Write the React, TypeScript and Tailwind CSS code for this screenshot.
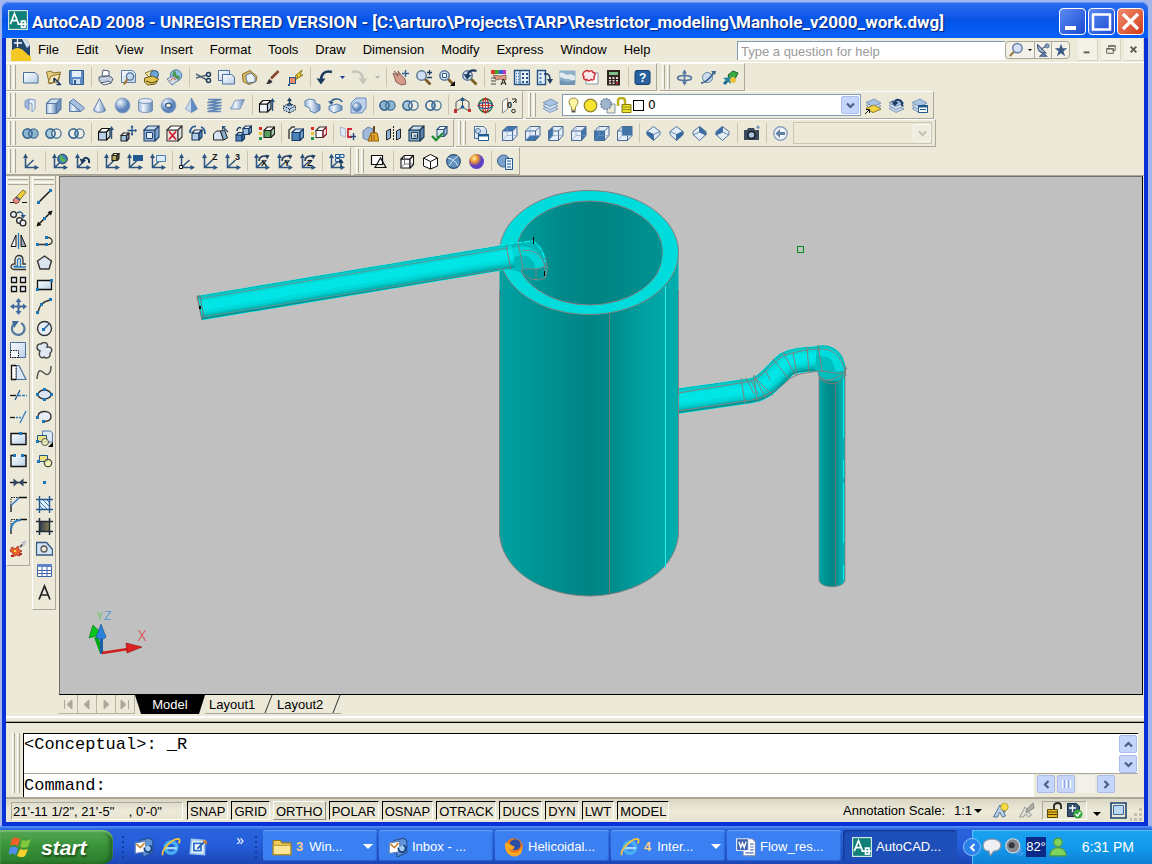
import type { ReactNode } from "react";

const NAVY = "#1d3a5f";
const UCS = "#2b5580";

const cube = (x: number, y: number, s: number, d: number, f: string, t: string, r: string, k = NAVY) => (
  <g stroke={k} strokeWidth="1.1" strokeLinejoin="round">
    <path fill={f} d={`M${x} ${y + d}h${s}v${s}h${-s}z`} />
    <path fill={t} d={`M${x} ${y + d}l${d} ${-d}h${s}l${-d} ${d}z`} />
    <path fill={r} d={`M${x + s} ${y + d}l${d} ${-d}v${s}l${-d} ${d}z`} />
  </g>
);

const axes = (
  <g>
    <path d="M3.500 3v11.500H15M3.500 14.500L11.500 7" stroke={UCS} strokeWidth="1.500" fill="none" />
    <path d="M1 5L3.500.5l2.500 4.500zM12.500 12L17 14.500l-4.500 2.500z" fill={UCS} />
  </g>
);

const rings = (a: string, m: string, b: string) => (
  <g stroke="#3d6b95" strokeWidth="1.200">
    <circle cx="5.500" cy="8.500" r="4.600" fill={a} />
    <circle cx="11.500" cy="8.500" r="4.600" fill={b} />
    <path d="M8.500 5a4.600 4.600 0 0 1 0 7a4.600 4.600 0 0 1 0-7z" fill={m} />
    <circle cx="5.500" cy="8.500" r="4.600" fill="none" />
  </g>
);

const dots = (pts: [number, number][]) => (
  <g fill="#1b75b8">
    {pts.map(([x, y]) => (
      <rect key={`${x}-${y}`} x={x} y={y} width="3" height="3" />
    ))}
  </g>
);

const viewBoxCube = (face: string) => {
  const p: Record<string, string> = {
    top: "M1.500 6L6 1.500H16L11.500 6z",
    bottom: "M1.500 15.500L6 10.500H16L11.500 15.500z",
    left: "M1.500 6L6 1.500V10.500L1.500 15.500z",
    right: "M11.500 6L16 1.500V10.500L11.500 15.500z",
    front: "M1.500 6H11.500V15.500H1.500z",
    back: "M6 1.500H16V10.500H6z",
  };
  return (
    <g>
      <path d="M1.500 6L6 1.500H16V10.500L11.500 15.500H1.500z" fill="#e4edf8" />
      <path d={p[face]} fill="#3f76ae" />
      <path d="M1.500 6L6 1.500H16V10.500L11.500 15.500H1.500zM1.500 6H11.500V15.500M11.500 6L16 1.500" stroke="#4a6c94" fill="none" />
      <path d="M6 1.500V10.500H16M6 10.500L1.500 15.500" stroke="#7f9dbf" strokeWidth=".6" fill="none" />
    </g>
  );
};

const isoFaces = [
  ["M2 6.500L8.500 9.500V15.500L2 9.500z", "#2f6ba8"],
  ["M8.500 9.500L15 6.500V9.500L8.500 15.500z", "#2f6ba8"],
  ["M8.500 1.500L15 7.500V10L8.500 7z", "#2f6ba8"],
  ["M8.500 1.500L2 7.500V10L8.500 7z", "#2f6ba8"],
];

const isoView = (k: number) => (
  <g stroke="#4f7199" strokeLinejoin="round">
    <path d="M8.500 1.500L15 6.500V9.500L8.500 15.500L2 9.500V6.500z" fill="#e3edf8" />
    <path d={isoFaces[k][0]} fill={isoFaces[k][1]} />
    <path d={k < 2 ? "M2 6.500L8.500 9.500L15 6.500M8.500 9.500V15.500" : "M2 10L8.500 7L15 10M8.500 7V1.500"} fill="none" strokeWidth=".8" />
  </g>
);

const layersArt = (
  <g stroke="#6f8db3" strokeWidth=".8">
    <path d="M1 11.500L9 8L16 12L8 15.500z" fill="#c4d4e8" />
    <path d="M1 8.500L9 5L16 9L8 12.500z" fill="#d5e2f2" />
    <path d="M1 5.500L9 2L16 6L8 9.500z" fill="#a9c3e2" />
  </g>
);

const rotAxis = (t: string) => (
  <g>
    {axes}
    <path d="M6 8a5 5 0 0 1 8-4" stroke={NAVY} strokeWidth="1.5" fill="none" />
    <path d="M12.500 1.500l4 1-2.500 4z" fill={NAVY} />
    <text x="8" y="13" fontSize="9" fontWeight="700" fill="#111" fontFamily="Liberation Sans, sans-serif">{t}</text>
  </g>
);

const magnifier = (
  <g>
    <path d="M10 10l5.500 5.500" stroke="#7a5b22" strokeWidth="2.600" />
    <circle cx="6.500" cy="6.500" r="4.700" fill="#cfe0f2" stroke="#5f7693" strokeWidth="1.500" />
  </g>
);

const cadLogo = (
  <g>
    <rect width="17" height="17" fill="#0f7f78" />
    <rect x=".5" y=".5" width="16" height="16" fill="none" stroke="#cfe8e6" />
    <path d="M2 12L5.500 3L9 12M3 9h5M8 12h8M11.500 9.500v5h3v-5z" stroke="#fff" strokeWidth="1.400" fill="none" />
  </g>
);

const ie = (
  <g fill="none">
    <circle cx="8.500" cy="9" r="4.800" stroke="#49b0f4" strokeWidth="3" />
    <path d="M4 9.500h9.500" stroke="#a5dcfd" strokeWidth="2" />
    <path d="M1.500 15.500C0 12 8 2 14.500 1.500c2 0 1.500 2.500.5 4" stroke="#f3c43c" strokeWidth="1.500" />
  </g>
);

const outlook = (
  <g>
    <path d="M5 3l8-2 3 2v10l-8 4z" fill="#5f94dc" stroke="#274f8d" />
    <path d="M1 5l9-1.500v9L1 14z" fill="#fff" stroke="#5a7fb5" />
    <path d="M2 6l3.500 3L9 5" stroke="#c3802c" fill="none" strokeWidth="1.300" />
    <path d="M9 9a3 3 0 1 0 4-2" stroke="#16407f" strokeWidth="1.500" fill="#a7cdf6" />
  </g>
);

const art: Record<string, ReactNode> = {
  new: <path d="M1.500 3.500H13l3 3v7.500H1.500z" fill="url(#paper)" stroke="#4c6f97" />,
  open: (
    <g>
      <path d="M1.500 3l5-1 1 2 8-1-2 9-9 3z" fill="#e8cf7e" stroke="#8b7433" />
      <path d="M3 14l3-7 9-2-3 8z" fill="#f8e9b4" stroke="#8b7433" />
      <path d="M9 9l6 6M11.500 15.500H16M9 9v4" stroke={NAVY} strokeWidth="1.600" />
    </g>
  ),
  save: (
    <g>
      <path d="M1.500 1.500h14v14h-13l-1-1z" fill="#5e8cc4" stroke="#2f5b91" />
      <rect x="4" y="2" width="9" height="6" fill="#e6eff9" />
      <rect x="5" y="10" width="7" height="5" fill="#cddcee" />
      <rect x="6" y="11" width="2" height="4" fill="#2f5b91" />
    </g>
  ),
  print: (
    <g stroke="#4c5c72">
      <path d="M5 7l1-6 6 1v5z" fill="#fff" />
      <path d="M2 8l11-1 3 3-2 4H4l-2-3z" fill="#c4d0df" />
      <path d="M4 14l8-2 2 2-7 2z" fill="#f3f6fa" />
    </g>
  ),
  preview: (
    <g>
      <path d="M1.500 1.500h11l3 3v9h-14z" fill="url(#paper)" stroke="#5f7fa5" />
      <circle cx="10" cy="7.500" r="3.600" fill="#c4daf1" stroke="#546f92" strokeWidth="1.300" />
      <path d="M7.500 10L4 15.500" stroke="#a07735" strokeWidth="2.200" />
    </g>
  ),
  publish: (
    <g>
      <path d="M2 4l8-3 4 3-8 4z" fill="#f2e3a0" stroke="#8a7636" />
      <circle cx="11.500" cy="5.500" r="4" fill="#6aa8d8" stroke="#35577c" />
      <path d="M1.500 9l8-2 6 3-3 5-8 1-3-3z" fill="#e2c34d" stroke="#6d5d28" />
      <path d="M3 12l6 2 5-2" stroke="#554618" fill="none" />
    </g>
  ),
  web: (
    <g>
      <circle cx="10" cy="6.500" r="5.700" fill="#8fc3ea" stroke="#53799f" />
      <path d="M8 1.500c4 2 0 4 4 5s1 4-1 5c-4-3-6-5-3-10z" fill="#4b9c50" />
      <path d="M1 10l6-3 6 4-7 5z" fill="#cfdceb" stroke="#66809e" />
      <path d="M4 12l3-3 3 2" stroke="#d85a30" fill="none" />
    </g>
  ),
  cut: (
    <g fill="none">
      <path d="M1 5l11 6M1 9l11-3" stroke="#59677a" strokeWidth="1.500" />
      <circle cx="13.500" cy="5.500" r="2" stroke={NAVY} strokeWidth="1.500" />
      <circle cx="13.500" cy="11.500" r="2" stroke={NAVY} strokeWidth="1.500" />
    </g>
  ),
  copy: (
    <g stroke="#4c719c">
      <path d="M.5 1.500h11v10H.500z" fill="url(#paper)" />
      <path d="M4.500 5.500h9l3 2.500v7h-12z" fill="url(#paper)" />
    </g>
  ),
  paste: (
    <g>
      <path d="M1.500 5L9 1.500l7 6-1 5-7 3-6-3z" fill="#ddb85c" stroke="#8a6c2c" />
      <path d="M5 6l5-2 4 4v5l-7 1-2-4z" fill="#e6effa" stroke="#5475a0" />
    </g>
  ),
  brush: (
    <g>
      <path d="M14.500 2L7 9.500" stroke="#8b4a2c" strokeWidth="2.600" />
      <path d="M2 15c2-1 1-3 3.500-5l3 2.500C7 15 4.500 15 2 15z" fill="#333" />
    </g>
  ),
  block: (
    <g>
      <path d="M15 1L8 7h3L8 11l8-5h-3z" fill="#f5d432" stroke="#8b7619" />
      <rect x="2.500" y="8.500" width="6" height="6" fill="#ef8a62" stroke="#23578c" />
      <path d="M1 15h2v2H1z" fill="#23578c" />
    </g>
  ),
  undo: (
    <g>
      <path d="M16 3C9 1 5 5 5 11" stroke={NAVY} strokeWidth="2.400" fill="none" />
      <path d="M.500 9.500h9L5 15.500z" fill={NAVY} />
    </g>
  ),
  redo: (
    <g>
      <path d="M1 3c7-2 11 2 11 8" stroke="#c6c5bb" strokeWidth="2.400" fill="none" />
      <path d="M7.500 9.500h9L12 15.500z" fill="#c6c5bb" />
    </g>
  ),
  pan: (
    <g>
      <path d="M1 4l5 3-4-5 5 4-1-4 4 5 3 3 1 5-5 1-5-3z" fill="#d69a8c" stroke="#7b5148" strokeWidth=".8" />
      <path d="M13.500 1v7M10 4.500h7" stroke="#33628f" strokeWidth="1.400" />
    </g>
  ),
  zoomRt: <g>{magnifier}<path d="M12 3.500h5M14.500 1v5M12 8.500h5" stroke={NAVY} strokeWidth="1.300" /></g>,
  zoomWin: <g>{magnifier}<path d="M4.500 4.500h4v4h-4z" stroke="#33628f" fill="#fff" /><path d="M17 12v5h-5z" fill="#000" /></g>,
  zoomPrev: <g>{magnifier}<path d="M15.500 2C10 0 7 3 6 7" stroke={NAVY} strokeWidth="2.200" fill="none" /><path d="M2.500 5l8 1-4.500 4.500z" fill={NAVY} /></g>,
  props: (
    <g>
      <path d="M1 1h4v4H1z" fill="#e0392e" /><path d="M5 1h4v4H5z" fill="#42a832" /><path d="M9 1h4v4H9z" fill="#3a5fd9" /><path d="M13 1h3v4h-3z" fill="#c531c0" />
      <path d="M3 6l7 1 6-1v5l-6-1-4 1z" fill="#dc9c87" stroke="#7b4b3c" strokeWidth=".7" />
      <path d="M1 9h5M1 12h5M1 15h5" stroke="#444" />
      <path d="M11 16l2.500-6L16 16M12 14h3" stroke="#111" fill="none" />
    </g>
  ),
  dc: (
    <g>
      <path d="M1.500 1.500h15v14h-15z" fill="#e7f0fa" stroke="#22507f" strokeWidth="1.400" />
      <path d="M7 1.500v14" stroke="#22507f" />
      <path d="M3 4.500h3M3 7.500h3M3 10.500h3M3 13h3" stroke="#4c8cc8" strokeWidth="1.500" strokeDasharray="1 1" />
      <path d="M9 4h2v2H9zM13 4h2v2h-2zM9 8h2v2H9zM13 8h2v2h-2zM9 12h2v2H9zM13 12h2v2h-2z" fill="#22507f" />
    </g>
  ),
  palette: (
    <g>
      <path d="M1.500 1.500h8v14h-8z" fill="#e7f0fa" stroke="#22507f" strokeWidth="1.400" />
      <path d="M3.500 4h2v2h-2zM3.500 8h2v2h-2zM3.500 12h2v2h-2z" fill="#3f7fbb" />
      <path d="M8 5c4-1 6 1 6 5" stroke={NAVY} strokeWidth="1.500" fill="none" />
      <path d="M11 10h6l-3 5z" fill={NAVY} />
    </g>
  ),
  sheet: (
    <g>
      <path d="M.5 1.500h16v14H.500z" fill="#8fb0c9" />
      <path d="M1 4c4-2 6 4 10 1l5 2v4c-4 2-5-2-9-1L1 8z" fill="#e3e9ec" /><path d="M1 11l8 2 7-2v5H1z" fill="#6f95b2" />
    </g>
  ),
  markup: (
    <g>
      <path d="M4 4h12v11H4z" fill="#fff" stroke="#8a94a2" />
      <path d="M3 2.500c2-2 4 0 4 0s3-2 4 1c3 0 2 3 1 4 1 3-1 4-3 3-2 2-4 1-4 0-3 1-4-2-3-3C0 6 1 3 3 2.500z" fill="#fde9e9" stroke="#cf2f3a" strokeWidth="1.500" />
    </g>
  ),
  calc: (
    <g>
      <rect x="2" y="1" width="13" height="15.500" fill="#31241f" />
      <rect x="4" y="3" width="9" height="3" fill="#7dc08a" />
      <path d="M4 8h2v2H4zM7.500 8h2v2h-2zM11 8h2v2h-2zM4 11h2v1.500H4zM7.500 11h2v1.500h-2zM11 11h2v1.500h-2zM4 13.500h2V15H4zM7.500 13.500h2V15h-2z" fill="#e8d6d0" /><path d="M11 13.500h2V15h-2z" fill="#e03030" />
    </g>
  ),
  help: (
    <g>
      <rect x="1" y="1.500" width="15" height="14" rx="2" fill="#29629f" stroke="#173f6d" />
      <text x="5" y="13" fontSize="12" fontWeight="700" fill="#fff" fontFamily="Liberation Sans, sans-serif">?</text>
    </g>
  ),
  orbit: (
    <g>
      <ellipse cx="8.500" cy="9" rx="7" ry="2.500" fill="none" stroke="#54779f" strokeWidth="1.600" />
      <path d="M8.500 2v13" stroke="#54779f" strokeWidth="1.800" /><path d="M6 4.500l2.500-4 2.500 4zM6 12.500l2.500 4 2.500-4z" fill="#54779f" />
    </g>
  ),
  orbit2: (
    <g>
      <circle cx="8.500" cy="8.500" r="5" fill="#cbdcf0" stroke="#63819f" />
      <path d="M2 14C6 14 14 7 15 2" stroke="#3d638f" strokeWidth="1.800" fill="none" /><path d="M12 2h5l-1 4z" fill="#3d638f" />
    </g>
  ),
  walk: (
    <g>
      <path d="M6 6l5-4 5 2-3 6-5 2z" fill="#3aab44" stroke="#196024" /><path d="M2 15l6-6" stroke="#1d6b8e" strokeWidth="3" /><path d="M1 9l7-1 1 7z" fill="#2787a5" />
      <circle cx="11" cy="11" r="3" fill="#edc33b" />
    </g>
  ),
  poly: <g stroke="#7d9cc4"><path d="M3 4l4-2v11l-4-3z" fill="#9db8da" /><path d="M7 2l6 1v9l-3 3V7l-3-1z" fill="#e3edf8" /></g>,
  box: cube(1.500, 2, 10, 4.500, "url(#steel)", "#cfdff1", "#6f93c3", "#5b7ba6"),
  wedge: <g stroke="#5b7ba6"><path d="M1.500 14.500V5L13 14.500z" fill="url(#steel)" /><path d="M1.500 5l4-3 11 9-3.500 3.500z" fill="#a9c2e2" /></g>,
  cone: <path d="M8.500 1.500L14.500 13c0 3-12 3-12 0z" fill="url(#steel)" stroke="#6482ac" />,
  sphere: <circle cx="8.500" cy="8.500" r="7.500" fill="url(#ball)" stroke="#7896c0" strokeWidth=".6" />,
  cyl: <g stroke="#6482ac" strokeWidth=".8"><path d="M1.500 4v9c0 3.300 14 3.300 14 0V4z" fill="url(#steel)" /><ellipse cx="8.500" cy="4" rx="7" ry="2.500" fill="#dfeaf7" /></g>,
  torus: <g><circle cx="8.500" cy="8.500" r="7.400" fill="url(#ball)" stroke="#7896c0" strokeWidth=".6" /><ellipse cx="8.500" cy="8.500" rx="3" ry="2.300" fill="#ece9d8" stroke="#2f5689" strokeWidth="1.200" /></g>,
  pyramid: <g strokeWidth=".6" stroke="#5b82b4"><path d="M8.500 1L2.500 12l6 3.500z" fill="#c8daef" /><path d="M8.500 1l6 11-6 3.500z" fill="#5d8bc2" /></g>,
  helix: <path d="M2 2.500h13L2 5.500h13L2 8.500h13L2 11.500h13L2 14.500h13" fill="none" stroke="#6087b5" strokeWidth="1.600" strokeLinejoin="round" />,
  plane: <path d="M1.500 12L6 3.500l9.500-1L11 12z" fill="url(#steel)" stroke="#7e99bf" />,
  extrude: <g>{cube(1.500, 3.500, 8, 3.500, "#f1f5fa", "#fff", "#b9cde4", "#111")}<path d="M14.500 3v11" stroke={UCS} strokeWidth="1.500" /><path d="M12 5l2.500-4L17 5z" fill={UCS} /></g>,
  pressPull: (
    <g><path d="M8.500 6l6 3v4l-6 3-6-3V9z" fill="#b3cae5" stroke="#333" strokeDasharray="1.500 1" /><path d="M2.500 9l6 3 6-3M8.500 12v4" stroke="#333" strokeDasharray="1.500 1" fill="none" /><path d="M8.500 2v5M6 8h5" stroke={NAVY} strokeWidth="1.400" /><path d="M6 4l2.500-3.500L11 4z" fill={NAVY} /></g>
  ),
  sweep: <path d="M1 4l4-2 6 1v3l5 2v5l-5 3-5-2v-3l-5-2z" fill="url(#steel)" stroke="#5d82b2" />,
  revolve: <g><path d="M2 9l8-2 5 2v4l-8 3-5-3z" fill="url(#steel)" stroke="#5d82b2" /><path d="M4 6C3 2 13 0 15 5" stroke="#33628f" strokeWidth="1.600" fill="none" /><path d="M1 4l6 1-3 3z" fill="#33628f" /></g>,
  loft: <g stroke="#6d8fbd"><path d="M1 6L6 1h10v10l-4 5H1z" fill="#bdd2eb" /><circle cx="7" cy="10" r="4.500" fill="url(#ball)" /></g>,
  union: rings("#8fb6cf", "#8fb6cf", "#8fb6cf"),
  subtract: rings("#a9c8da", "#efeee4", "#efeee4"),
  intersect: rings("#efeee4", "#8fb6cf", "#efeee4"),
  move3: (
    <g><path d="M8.500 1v9L2 14M8.500 10l6.500 4M8.500 1L2 5v9M8.500 1L15 5v9" stroke="#555" fill="none" /><path d="M6 4l2.500-4L11 4z" fill="#1f5f98" /><circle cx="8.500" cy="10" r="1.700" fill="#1f5f98" /><path d="M0 12h3v4H0z" fill="#bf2d2d" /><path d="M14 12h3v3h-3z" fill="#c8322b" /></g>
  ),
  rot3: (
    <g fill="none" strokeWidth="1.400"><circle cx="8.500" cy="8.500" r="6.800" stroke="#246e3c" /><ellipse cx="8.500" cy="8.500" rx="3" ry="6.800" stroke="#c8251f" /><ellipse cx="8.500" cy="8.500" rx="6.800" ry="3" stroke="#2757a4" /><path d="M8.500 0v17M0 8.500h17" stroke="#c8251f" strokeWidth=".8" /></g>
  ),
  align3: <g><path d="M2.500 4l5-3v11l-5 4z" fill="#f7f7f3" stroke="#888" /><text x="7" y="11" fontSize="9" fontWeight="700" fill="#111" fontFamily="Liberation Sans, sans-serif">0</text><path d="M13 6l3-3M12 2h4v4" stroke="#222" fill="none" /><circle cx="13.500" cy="14" r="1.800" fill="none" stroke="#222" /></g>,
  layers: layersArt,
  layerCur: <g>{layersArt}<path d="M1 11.500L9 8L16 12L8 15.500z" fill="#f2d343" stroke="#9a8321" /><path d="M0 17l4-4M1 12.500h3.500V16" stroke="#111" fill="none" /></g>,
  layerPrev: <g>{layersArt}<path d="M14 9C15 3 9 1 7 5" stroke={NAVY} strokeWidth="2" fill="none" /><path d="M3.500 4l7 1.500-4 4z" fill={NAVY} /></g>,
  layerState: <g>{layersArt}<path d="M7.500 8.500h9v7h-9z" fill="#fff" stroke="#205a91" /><path d="M7 8h10v2.500H7z" fill="#205a91" /><path d="M9 12.500h6" stroke="#205a91" /></g>,
  exFace: <g>{cube(1.500, 3.500, 8, 3.500, "#bcd2ea", "#fff", "#cfdded", "#111")}<path d="M14.500 3v11" stroke={UCS} strokeWidth="1.500" /><path d="M12 5l2.500-4L17 5z" fill={UCS} /></g>,
  mvFace: <g>{cube(1, 8, 5.500, 2.500, "#a4c1e0", "#fff", "#7097c3", "#222")}<path d="M12 1v9M7.500 5.500h9" stroke="#225488" strokeWidth="1.300" /><path d="M10.500 2.500L12 0l1.500 2.500zM10.500 8.500L12 11l1.500-2.500zM15 4l2 1.500L15 7z" fill="#225488" /></g>,
  offFace: <g>{cube(1, 1, 11, 4, "#8fb2dc", "#c9dcf0", "#7ea5d2", "#24446d")}<path d="M3.500 7.500h6v6h-6z" fill="#e4eefa" stroke="#24446d" /></g>,
  delFace: <g>{cube(1, 1, 11, 4, "#f2e3e3", "#fff", "#dedede", "#333")}<path d="M3 6.500l7 8M10 6.500l-7 8" stroke="#cf1f2e" strokeWidth="1.800" /></g>,
  rotFace: <g>{cube(3, 5, 7, 3, "#b5cde8", "#fff", "#4f7eb2", "#173961")}<path d="M1 8C1 3 4 1 7 1.500M16 9c0-4-1-6-4-7" stroke="#235b94" strokeWidth="1.800" fill="none" /></g>,
  taper: <g stroke="#222"><path d="M1.500 15V9l3-3h4l3 9z" fill="#d5e3f3" /><path d="M8.500 6l4-1 3 8-4 2z" fill="#88abd1" /><path d="M16 7l-5-5" strokeWidth="1.300" stroke={UCS} /><path d="M10 5V1h4z" fill={UCS} stroke="none" /></g>,
  copyFace: <g>{cube(1, 7.500, 6, 2.500, "#4f83ba", "#bcd2ea", "#3b6ea7", "#173961")}{cube(8, 1, 6, 2.500, "#9dbcde", "#fff", "#6f97c5", "#173961")}<path d="M2 6c0-3 2-4 4-3" stroke="#173961" fill="none" strokeWidth="1.500" /></g>,
  colFace: <g>{cube(6, 2, 7, 3.500, "#54a05b", "#fff", "#a6d0a9", "#222")}<path d="M1 2h3v3H1z" fill="#d92b2b" /><path d="M1 7h3v3H1z" fill="#e7c22f" /><path d="M1 12h3v3H1z" fill="#24944a" /></g>,
  copyEdge: <g>{cube(5, 4, 8, 3.500, "#4c82bb", "#cfe0f2", "#7aa2cf", "#173961")}<path d="M2 14V5l3-3h3" stroke="#444" strokeWidth="1.500" fill="none" /></g>,
  colEdge: <g>{cube(6, 2, 7, 3.500, "#fff", "#fff", "#f3dcdc", "#333")}<path d="M13 5.500l3.500-3.500v7l-3.500 3.500z" stroke="#c32b38" /><path d="M1 2h3v3H1z" fill="#d92b2b" /><path d="M1 7h3v3H1z" fill="#e7c22f" /><path d="M1 12h3v3H1z" fill="#24944a" /></g>,
  imprint: <g><path d="M1.500 2l5 2v8l-5-2z" fill="#e1eaf5" stroke="#a9b8cc" /><path d="M13 4H9v8h4" stroke="#d0273a" strokeWidth="1.800" fill="none" /><path d="M14.500 8v7M11.500 11.500h6" stroke="#24427a" strokeWidth="1.300" /></g>,
  clean: <g><path d="M1 6l5-4 5 2v9l-6 2-4-2z" fill="#9fbadb" stroke="#6682aa" /><path d="M12 1v7" stroke="#6b4a1b" strokeWidth="2" /><path d="M9 8h6l2 8H6z" fill="#e6a72d" stroke="#8a5d10" /><path d="M9.500 10v5M12 10v5" stroke="#8a5d10" /></g>,
  separate: <g stroke="#222"><path d="M1.500 6l4-2v9l-4 2zM11.500 6l4-2v9l-4 2z" fill="#8fb1d8" /><path d="M8.500 1v15" strokeDasharray="2 1" /></g>,
  shell: <g>{cube(1, 1, 11, 4, "#86a9c8", "#cddceb", "#5b83aa", "#1b3856")}<path d="M3.500 7.500h6v6h-6z" fill="#ece9d8" stroke="#1b3856" /><path d="M5.500 9.500h3v3h-3z" fill="#5b83aa" /></g>,
  check: <g>{cube(6, 1.500, 7, 3, "#dbe7f4", "#fff", "#9ebbdc", "#33587f")}<path d="M1 11l4 4 7-7" stroke="#1e8e36" strokeWidth="2.400" fill="none" /></g>,
  views: <g><path d="M2.500 1.500h9l3 3v9h-12z" fill="url(#paper)" stroke="#4c719c" /><circle cx="6" cy="6" r="2.500" fill="#c4daf1" stroke="#4c719c" /><path d="M6.500 9.500h10v6h-10z" fill="#fff" stroke="#205a91" /><path d="M6 9h11v2.500H6z" fill="#205a91" /></g>,
  camera: <g><path d="M1 5h3l1-2h6l1 2h4v10H1z" fill="#3b4a5a" /><circle cx="8.500" cy="10" r="3.500" fill="#a9c3de" stroke="#131b25" strokeWidth="1.500" /><path d="M15 0l1 2 1-1-1 3-3-1z" fill="#6d8fb5" /></g>,
  back: <g><circle cx="8.500" cy="8.500" r="6.700" fill="#f1f5fa" stroke="#8ba3bd" strokeWidth="1.500" /><path d="M3.500 8.500L8 4v3h5v3H8v3z" fill="#63809f" /></g>,
  ucs: axes,
  ucsWorld: <g>{axes}<circle cx="11.500" cy="6" r="4.800" fill="#3f80bd" stroke="#1d3a5f" /><path d="M9 2c4 1 2 3 5 4s-1 4-3 3c-2-2-3-4-2-7z" fill="#58b058" /></g>,
  ucsPrev: <g>{axes}<path d="M15 10c1-5-4-7-6-3" stroke={NAVY} strokeWidth="2" fill="none" /><path d="M5.500 5.500l6 1.500-3.500 4z" fill={NAVY} /></g>,
  ucsFace: <g>{axes}{cube(9, .5, 5, 2, "#b7a75c", "#efe8a0", "#776a2a", "#222")}</g>,
  ucsObj: <g>{axes}<path d="M7 2h10v6H7z" fill="#205a91" /></g>,
  ucsView: <g>{axes}<path d="M7.500 2.500h9v6h-9z" fill="#dceafa" stroke="#4c7db0" /></g>,
  ucsOrg: <g>{axes}<path d="M1.500 12.500h3v3h-3z" fill="#fff" stroke="#111" /></g>,
  ucsZ: <g>{axes}<text x="11" y="7" fontSize="9" fontWeight="700" fill="#111" fontFamily="Liberation Sans, sans-serif">Z</text></g>,
  ucs3: <g>{axes}<text x="11" y="7" fontSize="9" fontWeight="700" fill="#111" fontFamily="Liberation Sans, sans-serif">3</text></g>,
  ucsRx: rotAxis("X"),
  ucsRy: rotAxis("Y"),
  ucsRz: rotAxis("Z"),
  ucsApply: <g>{axes}<path d="M7.500 1.500h4v3h-4zM12 1.500h4v3h-4zM7.500 5.500h4v3h-4z" fill="#dceafa" stroke="#205a91" /><path d="M13 14V8M11 10l2-3 2 3" stroke={NAVY} strokeWidth="1.500" fill="none" /></g>,
  wire2d: <g fill="none" stroke="#111" strokeWidth="1.200"><path d="M1.500 2.500h11v9h-11z" fill="#fff" /><path d="M5 14.500L10.500 5l5.500 9.500z" /></g>,
  wire3d: <g>{cube(2, 2.500, 9, 3.500, "#fff", "#fff", "#fff", "#111")}<path d="M5.500 2.500v8.500h9M5.500 11L2 14.500" stroke="#555" strokeWidth=".8" /></g>,
  hidden: <g stroke="#111" fill="#fff"><path d="M8.500 1.500l7 3.500v8l-7 3-7-3V5z" /><path d="M1.500 5l7 3.500L15.500 5M8.500 8.500V16" fill="none" /></g>,
  realistic: <g><circle cx="8.500" cy="8.500" r="6.800" fill="#6291bd" stroke="#274e77" strokeWidth="1.200" /><path d="M3 5c5 1 8 4 10 8M13 3c-3 2-7 6-9 10" stroke="#d8e8f6" fill="none" /></g>,
  conceptual: <circle cx="8.500" cy="8.500" r="7.500" fill="url(#warm)" />,
  vsm: <g><circle cx="6.500" cy="8" r="6" fill="#7ca4cc" stroke="#335d8a" /><path d="M8.500 5.500h7v11h-7z" fill="#edf4fb" stroke="#205a91" /><path d="M10 8h4M10 11h4M10 14h4" stroke="#205a91" /></g>,
  erase: <g><path d="M0 14.500h5M12 14.500h5" stroke="#111" /><path d="M5 10l8-8 3 2-7 9z" fill="#f0cd3e" stroke="#8a7625" /><path d="M3 12l3-3 4 3-2 3-3 .5z" fill="#e88d83" stroke="#93413b" /><path d="M6 9l4 3" stroke="#4a5f85" strokeWidth="2" /></g>,
  copyObj: <g fill="#e8eff8" stroke="#222" strokeWidth="1.300"><circle cx="3.500" cy="4.500" r="2.900" /><circle cx="9.500" cy="10.500" r="2.900" /><circle cx="13" cy="13" r="2.900" /><path d="M7 3c3-2 6-1 6 3" stroke="#23578c" fill="none" /><path d="M10.500 5h5.500l-3 3.500z" fill="#23578c" stroke="none" /></g>,
  mirror: <g><path d="M6 3v11.500H1z" fill="#f6f8fb" stroke="#111" /><path d="M11 3v11.500h5z" fill="#9aabc0" stroke="#111" /><path d="M8.500 1v16" stroke="#2477b8" strokeWidth="1.300" /></g>,
  offset: <g fill="none"><path d="M16 15.500H4c-5-1-3-6 1-5.500V6c0-6 8-6 8 0v4h3" stroke="#333" strokeWidth="1.300" /><path d="M16 13H4.500c-1-1 0-1 3-1V6c1-2 3-2 3 0v6.500" stroke="#2e7cc0" strokeWidth="1.300" /></g>,
  array: <path d="M1.500 1.500h5v5h-5zM10.500 1.500h5v5h-5zM1.500 10.500h5v5h-5zM10.500 10.500h5v5h-5z" fill="#e8eff8" stroke="#111" strokeWidth="1.300" />,
  move: <g><path d="M8.500 2v13M2 8.500h13" stroke="#41689a" strokeWidth="2" /><path d="M5.500 4l3-4 3 4zM5.500 13l3 4 3-4zM4 5.500l-4 3 4 3zM13 5.500l4 3-4 3z" fill="#41689a" /></g>,
  rotate: <g><path d="M11 3a6.300 6.300 0 1 1-7 1" stroke="#54779f" strokeWidth="2.200" fill="none" /><path d="M2 1h7l-5 7z" fill="#41689a" /></g>,
  scale: <g><path d="M.5.500h15v15H.500z" fill="url(#paper)" stroke="#4c719c" /><path d="M.500 8.500h8v7h-8z" fill="#f8fbfe" stroke="#111" strokeDasharray="1.500 1" /></g>,
  stretch: <g><path d="M6 1.500h3l7 14H6z" fill="#dce8f6" stroke="#4c719c" strokeWidth="1.200" /><path d="M6 1.500H1.500v14H6" fill="#fff" stroke="#111" strokeWidth="1.300" /><path d="M6 1.500v14" stroke="#111" strokeDasharray="1.500 1" /></g>,
  trim: <g strokeWidth="1.300"><path d="M0 9.500h6" stroke="#111" /><path d="M5 14l5-10" stroke="#23578c" /><path d="M8 9.500h9" stroke="#2e7cc0" strokeDasharray="3 1" /></g>,
  extend: <g strokeWidth="1.300"><path d="M0 9.500h5" stroke="#111" /><path d="M6 9.500h5" stroke="#2e7cc0" strokeDasharray="2 1" /><path d="M10 15l6-12" stroke="#2e7cc0" /></g>,
  breakPt: <g><path d="M1 3.500h15v11H1z" fill="url(#paper)" stroke="#111" strokeWidth="1.400" />{dots([[9, 2]])}</g>,
  brk: <g><path d="M1 3.500h15v11H1z" fill="url(#paper)" /><path d="M4 3.500H1v11h15v-11h-3" fill="none" stroke="#111" strokeWidth="1.400" />{dots([[3, 2], [11, 2]])}</g>,
  join: <g><path d="M0 8.500h17" stroke="#111" strokeWidth="1.400" /><path d="M3.500 4.500l5 4-5 4zM13.500 4.500l-5 4 5 4z" fill="#33455f" /></g>,
  chamfer: <g fill="none"><path d="M1 16V9M9 1.500h8" stroke="#111" strokeWidth="1.300" /><path d="M1 9V1.500h8" stroke="#111" strokeDasharray="1.500 1" /><path d="M1 9.500L9 2" stroke="#2e7cc0" strokeWidth="1.500" /></g>,
  fillet: <g fill="none"><path d="M1 16V10M10 1.500h7" stroke="#111" strokeWidth="1.300" /><path d="M1 9V1.500h8" stroke="#111" strokeDasharray="1.500 1" /><path d="M1 12C1 6 5 2 11 2" stroke="#2e7cc0" strokeWidth="1.800" /></g>,
  explode: <g><path d="M15 2l-5 5" stroke="#555" strokeWidth="2" /><path d="M11 1l2 2 3-3v4l-3 3z" fill="#c4c9d2" /><path d="M2 7l3 2 3-3 1 4 3 1-3 2 1 3-4-1-3 2 0-4-3-2z" fill="#e8642a" stroke="#a81f17" strokeWidth=".8" /><path d="M4 10h2v2H4z" fill="#f6d93d" /><path d="M1 15h2v2H1zM10 13h2v2h-2z" fill="#b61d1d" /></g>,
  line: <g><path d="M3 14L14 3" stroke="#111" strokeWidth="1.400" />{dots([[1, 13], [13, 1]])}</g>,
  xline: <g><path d="M2 15L15 2" stroke="#111" strokeWidth="1.400" /><path d="M.500 16.500l1.500-5 3.500 3.500zM16.500.500l-1.500 5-3.500-3.500z" fill="#111" />{dots([[7, 7]])}</g>,
  pline: <g><path d="M2 12.500h8M10 5.500c8-1 8 8 1 7" stroke="#333" strokeWidth="1.300" fill="none" />{dots([[0, 11], [9, 11], [9, 4]])}</g>,
  polygon: <path d="M8.500 2L15.500 7l-2.500 8H4L1.500 7z" fill="#dbe5f1" stroke="#333" strokeWidth="1.400" />,
  rect: <g><path d="M1.500 4.500h14v9h-14z" fill="url(#paper)" stroke="#111" strokeWidth="1.300" />{dots([[0, 12], [14, 3]])}</g>,
  arc: <g><path d="M2 15C3 7 7 3 15 2" stroke="#333" strokeWidth="1.300" fill="none" />{dots([[0, 13], [4, 5], [13, 0]])}</g>,
  circle: <g><circle cx="8.500" cy="8.500" r="7" fill="#e5edf6" stroke="#333" strokeWidth="1.400" /><path d="M8 9l5-5" stroke="#23578c" strokeWidth="1.500" />{dots([[6, 8]])}</g>,
  cloud: <path d="M4 9C-1 7 1 1 5 2c3-3 8-1 6 3 5-1 6 4 3 6 1 5-4 6-6 4-3 2-6-1-4-6z" fill="#dfe8f2" stroke="#444" strokeWidth="1.400" />,
  spline: <path d="M1 15C2 4 5 6 8 9s7 2 7-7" stroke="#555" strokeWidth="1.500" fill="none" />,
  ellipse: <g><ellipse cx="8.500" cy="8.500" rx="6.500" ry="4.500" fill="#dbe5f1" stroke="#333" strokeWidth="1.400" />{dots([[0, 7], [14, 7], [7, 2], [7, 12]])}</g>,
  elArc: <g><path d="M2 8C3 2 15 2 15 8.500c0 4-4 5-7 5" fill="#e8eef5" stroke="#333" strokeWidth="1.400" />{dots([[0, 8], [6, 12]])}</g>,
  insert: <g><path d="M6.500 1h8l2 2v9h-10z" fill="#dce8f6" stroke="#5b7ba6" /><path d="M1.500 5.500h9v6h-9z" fill="#ece27d" stroke="#23578c" /><circle cx="9" cy="12" r="3.500" fill="#f3efae" stroke="#555" fillOpacity=".8" />{dots([[0, 10]])}<path d="M17 12v5h-5z" fill="#000" /></g>,
  mkBlock: <g><path d="M3.500 3.500h8v6h-8z" fill="#ece27d" stroke="#23578c" /><circle cx="12" cy="11" r="3.700" fill="#f3efae" stroke="#444" strokeWidth="1.200" fillOpacity=".8" />{dots([[1, 8]])}</g>,
  point: dots([[7, 7]]),
  hatch: <g><path d="M3 3h11v11H3z" fill="#e8f1fb" /><path d="M3 5l9 9M3 9l5 5M6 3l8 8M10 3l4 4" stroke="#2e7cc0" /><path d="M3.500 0v17M13.500 0v17M0 3.500h17M0 13.500h17" stroke="#23578c" strokeWidth="1.400" /></g>,
  gradient: <g><path d="M3 3h11v11H3z" fill="url(#dusk)" /><path d="M3.500 0v17M13.500 0v17M0 3.500h17M0 13.500h17" stroke="#222b38" strokeWidth="1.500" /></g>,
  region: <g><path d="M.500 2.500h10l6 7v5.500h-16z" fill="#d5e4f5" stroke="#33587f" strokeWidth="1.300" /><circle cx="8" cy="9" r="3" fill="#ece9d8" stroke="#555" strokeWidth="1.300" /></g>,
  table: <g><path d="M1.500 2.500h14v12h-14z" fill="#fff" stroke="#3f62a8" /><path d="M1 2h15v3H1z" fill="#5f84c8" /><path d="M1.500 8.500h14M1.500 11.500h14M6 5v10M11 5v10" stroke="#3f62a8" /></g>,
  mtext: <path d="M3 15.500L8.500 2l5.500 13.500M5 11h7" stroke="#222" strokeWidth="1.700" fill="none" />,
  star: <path d="M8.500 1l2 5.500H16l-4.500 3.500 2 6-5-3.500-5 3.500 2-6L1 6.500h5.500z" fill="#3c5a88" />,
  dish: <g><path d="M2 2c-1 7 4 11 10 10z" fill="#a6bad4" stroke="#405b82" strokeWidth="1.300" /><path d="M7 7l6-4M9 12l-4 4h8z" stroke="#405b82" strokeWidth="1.300" fill="#6f8bb3" /><circle cx="13.500" cy="3.500" r="2.500" fill="#8ba5c9" stroke="#405b82" /></g>,
  search: <g><path d="M6.500 10L2 15" stroke="#a08045" strokeWidth="2.400" /><circle cx="10" cy="6.500" r="5" fill="#d6e1f7" stroke="#6a7daa" strokeWidth="1.600" /></g>,
  bulb: <g><path d="M8.500 1C3 1 3 7 6.500 10v3h4v-3C14 7 14 1 8.500 1z" fill="#fdf5a2" stroke="#9a8c3a" /><path d="M6.500 14.500h4" stroke="#555" strokeWidth="2" /></g>,
  sun: <circle cx="8.500" cy="8.500" r="6.300" fill="#f6e32f" stroke="#8f8332" strokeWidth="1.200" />,
  vpSun: <g><path d="M8 7h8v9H8z" fill="#ece9d8" stroke="#8296ac" /><circle cx="7" cy="7" r="5.300" fill="#9eb4cb" stroke="#71879f" strokeDasharray="2 1" strokeWidth="1.500" /></g>,
  lock: <g><path d="M2 9V4c0-4 7-4 7 0v4" fill="none" stroke="#b9ae17" strokeWidth="2.400" /><path d="M6 7.500h9v8H6z" fill="#ece02f" stroke="#857b10" /><path d="M6 10h9M6 12.500h9" stroke="#857b10" strokeWidth=".8" /></g>,
  annoBulb: <g><path d="M8 3L1.500 15h4l2-5 3 5 3-1z" fill="#bcd2ea" stroke="#4c719c" /><circle cx="12.500" cy="5" r="3.700" fill="#f7de47" stroke="#a98e1d" strokeWidth=".7" /><path d="M11.500 8.500h2v2h-2z" fill="#777" /></g>,
  annoAuto: <g><path d="M7 5L1.500 15h4l2-3 3 3 3-2z" fill="#dcdcd4" stroke="#999" /><path d="M15 1l-6 6-1 4 8-5z" fill="#aeaea6" stroke="#888" /></g>,
  padlock: <g><path d="M8 8V4c0-4 7-4 7 0v3" fill="none" stroke="#222" strokeWidth="1.800" /><path d="M1.500 7.500h10v8h-10z" fill="#e4b81f" stroke="#5c4708" /><path d="M2 10h9M2 12.500h9" stroke="#5c4708" /></g>,
  drawing: <g><path d="M1.500 1.500h9l3 3v10h-12z" fill="#35516f" stroke="#1a2e44" /><path d="M3 6h7M6.500 3v7" stroke="#fff" strokeWidth="1.300" /><circle cx="12" cy="12" r="4.500" fill="#3aa845" /><path d="M9.500 12l2 2 3-4" stroke="#fff" strokeWidth="1.400" fill="none" /></g>,
  cleanScr: <g><path d="M1 1h15v15H1z" fill="#ece9d8" stroke="#1b4470" strokeWidth="1.600" /><path d="M3.500 3.500h10v9h-10z" fill="#bcd8f2" stroke="#38689b" /></g>,
  cad: cadLogo,
  ie,
  outlook,
  desktop: <g><path d="M3 2l11 1v12l-12-1z" fill="#e5f1fd" stroke="#9cc4ef" strokeWidth="1.400" /><path d="M5 5.500h6v6H5z" fill="#fff" stroke="#2f74d0" strokeWidth="1.500" /><path d="M8 10l6-6" stroke="#2f63b3" strokeWidth="1.600" /><path d="M12 3h4v4z" fill="#d9822a" /></g>,
  folder: <g><path d="M1 3h6l1.500 2H16v10H1z" fill="#f1cf5b" stroke="#9a7a1d" /><path d="M1 7h15v8H1z" fill="#fbe694" stroke="#b28f2e" /></g>,
  firefox: <g><circle cx="8.500" cy="8.500" r="7.500" fill="#e8741c" /><circle cx="9.500" cy="6.500" r="4.600" fill="#2b4fa5" /><path d="M1 5c3-1 4 2 8 3 0 3-4 3-5 2 2 5 10 4 11-2 2 7-5 10-9 8S0 9 1 5z" fill="#f9a824" /></g>,
  word: <g><path d="M6 1.500h8l2.500 2.500v12H6z" fill="#fff" stroke="#7289b8" /><path d="M12 6h3M12 8.500h3M12 11h3M8 13.500h7" stroke="#5272b5" /><path d="M.5 1.500h10v10H.500z" fill="#3c62ad" stroke="#dfe8f8" /><path d="M2.500 4l1.500 5 1.500-4L7 9l1.500-5" stroke="#fff" fill="none" strokeWidth="1.200" /></g>,
  balloon: <path d="M1 7c0-7 15-7 15 0 0 4-4 5-6 5l-3 4-1-4C3 12 1 10 1 7z" fill="#eef0f3" stroke="#8e96a3" />,
  speaker: <g><circle cx="7.500" cy="7.500" r="6" fill="#84878d" stroke="#d5d8dd" /><circle cx="6.500" cy="7" r="2.600" fill="#33363b" /><path d="M11 15l4-5M14 16l2-3" stroke="#5c9df0" strokeWidth="1.500" /></g>,
  buddy: <g fill="#7fd35f" stroke="#4f9a3c"><circle cx="8.500" cy="4.500" r="3.600" /><path d="M1.500 16c0-4 3-7 7-7s7 3 7 7z" /></g>,
};

function Glyph({ name, big = false }: { name: string; big?: boolean }) {
  return (
    <svg viewBox="0 0 17 17" className={big ? "h-5 w-5 shrink-0" : "h-[17px] w-[17px] shrink-0"} fill="none" aria-hidden="true">
      {art[name]}
    </svg>
  );
}

function Tool({ name }: { name: string }) {
  return (
    <button type="button" aria-label={name} className="flex h-[23px] w-[23px] shrink-0 items-center justify-center">
      <Glyph name={name} />
    </button>
  );
}

function Sep() {
  return (
    <span className="flex h-5 w-[6px] shrink-0 justify-center">
      <span className="w-px bg-[#c9c5b2]" />
    </span>
  );
}

function DropMark({ faded = false }: { faded?: boolean }) {
  return (
    <button type="button" aria-label="History" className="flex h-[23px] w-3 shrink-0 items-center justify-center">
      <svg viewBox="0 0 5 3" className="h-[3px] w-[5px]">
        <path d="M0 0h5L2.500 3z" fill={faded ? "#b9b7aa" : "#1d3a8f"} />
      </svg>
    </button>
  );
}

function Grip() {
  return (
    <span className="flex w-[13px] shrink-0 gap-[2px] self-stretch py-px pl-[2px]">
      <span className="w-[3px] border-r border-l border-r-[#aca899] border-l-white" />
      <span className="w-[3px] border-r border-l border-r-[#aca899] border-l-white" />
    </span>
  );
}

function Bar({ items, children }: { items: string; children?: ReactNode }) {
  return (
    <div role="toolbar" className="flex h-7 shrink-0 items-center border-t border-r border-b border-t-white border-r-[#aca899] border-b-[#aca899] pr-[2px]">
      <Grip />
      {items.split(" ").filter(Boolean).map((n, i) => {
        if (n === "|") return <Sep key={i} />;
        if (n === "v") return <DropMark key={i} />;
        if (n === "w") return <DropMark key={i} faded />;
        return <Tool key={i} name={n} />;
      })}
      {children}
    </div>
  );
}

function SideBar({ items }: { items: string }) {
  return (
    <div role="toolbar" className="flex w-6 shrink-0 flex-col items-center self-start border-r border-b border-l border-r-[#aca899] border-b-[#aca899] border-l-white pb-[4px]">
      <div className="flex h-[11px] w-5 flex-col gap-[2px] pt-px">
        <span className="h-[3px] border-t border-b border-t-white border-b-[#aca899]" />
        <span className="h-[3px] border-t border-b border-t-white border-b-[#aca899]" />
      </div>
      {items.split(" ").map((n) => (
        <button key={n} type="button" aria-label={n} className="flex h-[22px] w-[22px] items-start justify-center pt-px">
          <Glyph name={n} />
        </button>
      ))}
    </div>
  );
}

const chevrons: Record<string, string> = {
  down: "M1 2.500l3.500 3.500L8 2.500",
  up: "M1 6.500L4.500 3L8 6.500",
  left: "M6.500 1L3 4.500L6.500 8",
  right: "M2.500 1L6 4.500L2.500 8",
};

function ScrollButton({ dir, off = false }: { dir: string; off?: boolean }) {
  return (
    <button
      type="button"
      aria-label={dir}
      className={`flex h-[18px] w-[18px] shrink-0 items-center justify-center rounded-[2px] border ${off ? "border-[#f8f7f2] bg-[#efede0]" : "border-[#a9bdec] bg-[#c5d5fc]"}`}
    >
      <svg viewBox="0 0 9 9" className="h-[9px] w-[9px]">
        <path d={chevrons[dir]} fill="none" stroke={off ? "#c3c0b2" : "#4d6185"} strokeWidth="2.200" />
      </svg>
    </button>
  );
}

function Defs() {
  return (
    <svg className="absolute h-0 w-0" aria-hidden="true">
      <defs>
        <linearGradient id="paper" x2="1" y2="1"><stop stopColor="#fbfdff" /><stop offset="1" stopColor="#b9cfe8" /></linearGradient>
        <linearGradient id="steel"><stop stopColor="#9ab6da" /><stop offset=".35" stopColor="#f0f5fb" /><stop offset="1" stopColor="#5f86b8" /></linearGradient>
        <radialGradient id="ball" cx=".35" cy=".3"><stop stopColor="#f3f7fd" /><stop offset="1" stopColor="#5c84bb" /></radialGradient>
        <radialGradient id="warm" cx=".35" cy=".3"><stop stopColor="#fff1a0" /><stop offset=".5" stopColor="#e8922f" /><stop offset="1" stopColor="#5b3fc4" /></radialGradient>
        <linearGradient id="dusk" x2="1"><stop stopColor="#2a3550" /><stop offset="1" stopColor="#8f8350" /></linearGradient>
      </defs>
    </svg>
  );
}

const menus = ["File", "Edit", "View", "Insert", "Format", "Tools", "Draw", "Dimension", "Modify", "Express", "Window", "Help"];

function TitleButton({ label, d, red = false }: { label: string; d: ReactNode; red?: boolean }) {
  return (
    <button
      type="button"
      aria-label={label}
      className={`h-[27px] w-[27px] rounded-[4px] border border-white bg-gradient-to-br ${red ? "from-[#f08a6c] to-[#d03a12]" : "from-[#5c8af4] to-[#1c49cf]"}`}
    >
      <svg viewBox="0 0 25 25" className="h-full w-full" fill="none" stroke="#fff">
        {d}
      </svg>
    </button>
  );
}

const pipeTones: [number, string, number][] = [
  [25, "#00f0f0", 0],
  [24, "#009494", 0],
  [22, "#00b4b4", -1],
  [19, "#00cccc", -2],
  [15, "#00dada", -2],
  [9, "#00e6e6", -2],
];

function Model() {
  const leftRun = "M200 308L513 256";
  const rightRun = "M672 402L750 391C768 388 774 374 787 364C796 359 806 360 825 358";
  return (
    <svg viewBox="60 177 1082 517" preserveAspectRatio="xMinYMin meet" className="block h-[517px] w-full" role="img" aria-label="Manhole model">
      <defs>
        <linearGradient id="shaft"><stop stopColor="#00a2a2" /><stop offset=".25" stopColor="#009292" /><stop offset=".5" stopColor="#008484" /><stop offset=".64" stopColor="#008c8c" /><stop offset=".8" stopColor="#00a0a0" /><stop offset="1" stopColor="#00aeae" /></linearGradient>
        <linearGradient id="bore"><stop stopColor="#009e9e" /><stop offset=".3" stopColor="#008a8a" /><stop offset=".55" stopColor="#008282" /><stop offset="1" stopColor="#009292" /></linearGradient>
        <linearGradient id="drop"><stop stopColor="#00a6a6" /><stop offset=".3" stopColor="#008e8e" /><stop offset=".55" stopColor="#008686" /><stop offset=".85" stopColor="#00aaaa" /><stop offset="1" stopColor="#00b8b8" /></linearGradient>
      </defs>

      <g fill="none">
        {pipeTones.map(([w, c, o]) => (
          <path key={w} d={rightRun} stroke={c} strokeWidth={w} transform={`translate(0 ${o})`} />
        ))}
      </g>
      <path d="M819 375V580C820 589 844 589 845 580V370C840 382 826 384 819 375z" fill="url(#drop)" stroke="#808080" strokeWidth=".8" />
      <path d="M817 346C834 342 847 355 846 374L838 381L826 380L819 376C818 370 815 371 815 371z" fill="#00bebe" />
      <path d="M820 352C832 351 838 358 840 371" stroke="#00dcdc" strokeWidth="9" fill="none" />
      <path d="M835.500 382V586" stroke="#707070" />
      <path d="M843.500 378V580" stroke="#00f0f0" strokeDasharray="60 22 18 5" />
      <g stroke="#808080" fill="none">
        <path d="M678 393L752 381C766 374 772 362 785 355C798 351 812 349 822 349C834 349 843 358 846 376" />
        <path d="M678 411L745 401C760 400 775 392 786 382C795 373 806 373 820 371C830 371 842 376 845 371" />
        <path d="M741 378l4 26M754 375l3 27M753 376l20 20M755 378l11 20M751 380l7 14M773 359l16 20M783 352l12 23M793 352l4 23M807 347l2 25M818 345l4 26M766 371l4 9M746 378l8 16M818 373C822 388 845 389 846 366M819 379C830 382 841 378 847 368" />
      </g>

      <path d="M499.500 252V535C504 577 552 596 589 596C626 596 674 577 678.500 535V252z" fill="url(#shaft)" />
      <path d="M499.500 290V535C504 577 552 596 589 596C626 596 674 577 678.500 535V290" stroke="#808080" fill="none" />
      <path d="M609.500 314V594" stroke="#707878" />
      <path d="M665.500 286V568" stroke="#20f0f0" />
      <path d="M502.500 275V548" stroke="#3a9090" strokeWidth=".6" />
      <ellipse cx="589" cy="252.500" rx="89.500" ry="62" fill="#00dcdc" stroke="#808080" />
      <ellipse cx="589.500" cy="253" rx="73.500" ry="52" fill="url(#bore)" stroke="#808080" />
      <path d="M660 230c5 20 4 30-2 45" stroke="#00dcdc" fill="none" />

      <path d="M500 245L533 240C545 247 549 262 546 277L537 281C524 277 521 271 512 270L500 269z" fill="#00b8b8" />
      <path d="M512 253C526 247 538 254 540 268" stroke="#00d4d4" strokeWidth="9" fill="none" />
      <path d="M521 270c4 9 14 12 24 8v-12c-8 6-16 1-24 4z" fill="#009a9a" stroke="#808080" />
      <g fill="none">
        {pipeTones.map(([w, c, o]) => (
          <path key={w} d={leftRun} stroke={c} strokeWidth={w} transform={`translate(0 ${o})`} />
        ))}
      </g>
      <path d="M197 296l5 24M197 296h3l4 22" stroke="#707070" fill="none" />
      <path d="M200 306v3" stroke="#000" strokeWidth="2" />
      <path d="M198 299L508 248M202 317L509 268" stroke="#5d9494" fill="none" />
      <g stroke="#808080" fill="none">
        <path d="M506 245l5 25M518 241l5 27M522 251C536 248 544 258 545 268M536 269v11M545 258c3 6 3 14 0 20" />
      </g>
      <path d="M500 245L533 241C540 246 544 253 545 262" stroke="#00ffff" strokeDasharray="6 2" fill="none" />
      <path d="M533.500 237v7M544.500 271v5" stroke="#000" />

      <rect x="797.500" y="246.500" width="6" height="6" fill="none" stroke="#008c1e" />

      <g>
        <path d="M102 653L96 637" stroke="#00a514" strokeWidth="4" />
        <path d="M89 638l4-13 9 9z" fill="#05c81b" stroke="#067a12" strokeWidth=".7" />
        <path d="M101.500 654V636" stroke="#1a5fa8" strokeWidth="3" />
        <path d="M96 637l5-13 5 13c-2 3-8 3-10 0z" fill="#2b82d8" stroke="#15538e" strokeWidth=".6" />
        <path d="M102 653L128 649" stroke="#d01c1c" strokeWidth="2.500" />
        <path d="M126 643l16 4-15 6z" fill="#e02020" stroke="#8b1111" strokeWidth=".6" />
      </g>
      <g fontFamily="Open Sans, sans-serif" fontWeight="300">
        <text x="97" y="620" fontSize="11" fill="#2fd03a">Y</text>
        <text x="104" y="620" fontSize="13" fill="#2b86dd">Z</text>
        <text x="138" y="641" fontSize="15" fill="#e02a2a">X</text>
      </g>
    </svg>
  );
}

const navPaths = ["M2.500 2v9M10 2v9L5 6.500z", "M8 2v9L3 6.500z", "M4 2v9L9 6.500z", "M9.500 2v9M2 2v9L7 6.500z"];

function LayoutTabs() {
  return (
    <div className="flex h-[21px] items-start pb-[2px]">
      {navPaths.map((d) => (
        <button key={d} type="button" aria-label="Browse tabs" className="flex h-[19px] w-[19px] items-center justify-center border-r border-b border-[#b8b5a5]">
          <svg viewBox="0 0 12 13" className="h-[13px] w-3">
            <path d={d} fill="#aca899" stroke="#aca899" />
          </svg>
        </button>
      ))}
      <div className="flex h-[19px] text-[13px] leading-[20px]">
        <button type="button" className="w-[70px] bg-black text-white [clip-path:polygon(0_0,100%_0,calc(100%_-_6px)_100%,6px_100%)]">Model</button>
        {["Layout1", "Layout2"].map((t) => (
          <button key={t} type="button" className="flex border-b border-[#aca899] pl-[4px]">
            <span className="w-[54px] text-left">{t}</span>
            <svg viewBox="0 0 10 18" className="h-[18px] w-[10px]">
              <path d="M9 0L2 18" stroke="#333" />
            </svg>
          </button>
        ))}
      </div>
    </div>
  );
}

const modes = ["SNAP", "GRID", "ORTHO", "POLAR", "OSNAP", "OTRACK", "DUCS", "DYN", "LWT", "MODEL"];

function StatusBar() {
  return (
    <div className="flex h-[25px] shrink-0 items-center border-t-2 border-t-[#aca899] bg-gradient-to-b from-[#d9d6c6] via-[#ece9d8] to-[#e6e3d0] pl-[5px]">
      <output className="h-[18px] w-[172px] border border-t-[#aca899] border-r-white border-b-white border-l-[#aca899] pl-px text-[13px] leading-[17px] whitespace-pre">
        21'-11 1/2", 21'-5"    , 0'-0"
      </output>
      <div className="flex gap-[3px] pl-[4px]">
        {modes.map((m) => (
          <button
            key={m}
            type="button"
            className={`h-[19px] border px-[2px] text-[13px] leading-[19px] ${m === "ORTHO" ? "border-t-white border-r-[#8d8a7b] border-b-[#8d8a7b] border-l-white" : "border-t-black border-r-white border-b-white border-l-black"}`}
          >
            {m}
          </button>
        ))}
      </div>
      <div className="ml-auto flex items-center">
        <label htmlFor="scale" className="text-[13px]">Annotation Scale:</label>
        <select id="scale" className="ml-[9px] w-5 appearance-none text-[13px] outline-none"><option>1:1</option></select>
        <svg viewBox="0 0 8 4" className="mr-[10px] h-1 w-2"><path d="M0 0h8L4 4z" /></svg>
        <button type="button" aria-label="Annotation visibility" className="mr-[9px]"><Glyph name="annoBulb" /></button>
        <button type="button" aria-label="Automatic scales" className="mr-[7px]"><Glyph name="annoAuto" /></button>
        <span className="flex gap-[3px] border border-t-[#aca899] border-r-white border-b-white border-l-[#aca899] px-[3px]">
          <button type="button" aria-label="Lock windows"><Glyph name="padlock" /></button>
          <button type="button" aria-label="Drawing status"><Glyph name="drawing" /></button>
        </span>
        <svg viewBox="0 0 8 4" className="mx-[6px] mt-[6px] h-1 w-2"><path d="M0 0h8L4 4z" /></svg>
        <button type="button" aria-label="Clean screen" className="mx-[3px]"><Glyph name="cleanScr" /></button>
        <svg viewBox="0 0 14 14" className="mt-[6px] h-[14px] w-[14px]"><path d="M9 1h3v3H9zM9 6h3v3H9zM9 11h3v3H9zM4 6h3v3H4zM4 11h3v3H4zM0 11h2v3H0z" fill="#c3bfae" /></svg>
      </div>
    </div>
  );
}

function CommandArea() {
  return (
    <div className="flex shrink-0 border-t border-t-black pt-[10px] pr-[6px] shadow-[0_-1px_0_#aca899]">
      <div className="flex w-[17px] shrink-0 gap-[2px] pb-[4px] pl-[6px]">
        <span className="w-[3px] border-r border-l border-r-[#aca899] border-l-white" />
        <span className="w-[3px] border-r border-l border-r-[#aca899] border-l-white" />
      </div>
      <div className="min-w-0 flex-1 border-t border-l border-black font-['Liberation_Mono','Courier_New',monospace] text-[17px]">
        <div className="flex border-b border-[#aca899] bg-white">
          <div className="h-[39px] flex-1 leading-[21px] whitespace-pre">{"<Conceptual>: _R"}</div>
          <div className="flex flex-col gap-[2px] px-px pt-px">
            <ScrollButton dir="up" />
            <ScrollButton dir="down" />
          </div>
        </div>
        <div className="flex h-[23px] items-start pr-[23px]">
          <label htmlFor="cmd" className="bg-white leading-[23px]">Command:</label>
          <input id="cmd" className="h-[23px] min-w-0 flex-1 bg-white outline-none" />
          <div className="flex items-center gap-[2px] pt-px pl-[3px]">
            <ScrollButton dir="left" />
            <button type="button" aria-label="Scroll" className="flex h-[18px] w-[18px] items-center justify-center gap-px rounded-[2px] border border-[#a9bdec] bg-[#c5d5fc]">
              <span className="h-2 w-px bg-white" /><span className="h-2 w-px bg-[#8da5e0]" /><span className="h-2 w-px bg-white" /><span className="h-2 w-px bg-[#8da5e0]" /><span className="h-2 w-px bg-white" />
            </button>
            <span className="h-[18px] w-[18px] bg-[#f1f0ea]" />
            <ScrollButton dir="right" />
          </div>
        </div>
      </div>
    </div>
  );
}

const tasks = [
  { icon: "folder", count: "3", text: "Win...", more: true },
  { icon: "outlook", text: "Inbox - ..." },
  { icon: "firefox", text: "Helicoidal..." },
  { icon: "ie", count: "4", text: "Inter...", more: true },
  { icon: "word", text: "Flow_res..." },
  { icon: "cad", text: "AutoCAD...", active: true },
];

function Dots() {
  return (
    <span className="flex w-2 shrink-0 flex-col gap-[3px]">
      {[0, 1, 2, 3, 4].map((i) => (
        <span key={i} className="h-[2px] w-[2px] bg-[#153f9e]" />
      ))}
    </span>
  );
}

function Taskbar() {
  return (
    <footer className="flex h-[38px] shrink-0 items-stretch bg-gradient-to-b from-[#2a63dc] via-[#245edb] to-[#1c46b5] pt-[4px] font-['Liberation_Sans',Arial,sans-serif] text-white shadow-[inset_0_2px_2px_#4f8df5]">
      <button type="button" className="flex w-[113px] shrink-0 items-center gap-2 rounded-r-[10px] bg-gradient-to-b from-[#56a854] via-[#379237] to-[#2c7c2c] pl-[9px] shadow-[inset_0_2px_2px_#7cc37a,inset_-3px_0_4px_#1c5c1c]">
        <svg viewBox="0 0 24 22" className="h-[22px] w-6" aria-hidden="true">
          <path d="M3 3c4-3 6-1 8 0L9 10c-3-1-5-2-8 0z" fill="#f0602c" />
          <path d="M13 4c3 1 5 1 9-1l-3 8c-3 1-5 1-8 0z" fill="#82c83a" />
          <path d="M1 12c3-2 5-1 8 0l-2 7c-3-2-5-2-8 0z" fill="#4f8df0" />
          <path d="M11 13c3 1 5 1 8 0l-3 7c-3 2-5 1-8 0z" fill="#fbd02e" />
        </svg>
        <span className="text-[21px] leading-none font-bold italic [text-shadow:1px_2px_2px_#1a4a1a]">start</span>
      </button>
      <div className="flex w-[150px] shrink-0 items-center pl-[9px]">
        <Dots />
        <div className="flex flex-1 items-center gap-[7px] pl-[4px]">
          {["outlook", "ie", "desktop"].map((n) => (
            <button key={n} type="button" aria-label={n}><Glyph name={n} big /></button>
          ))}
        </div>
        <button type="button" aria-label="More" className="mr-[11px] -mt-[14px] text-[14px]">»</button>
        <Dots />
      </div>
      <div className="flex min-w-0 flex-1 gap-[2px]">
        {tasks.map((t) => (
          <button
            key={t.text}
            type="button"
            className={`mb-[3px] flex w-[114px] items-center overflow-hidden rounded-[3px] pt-[2px] pl-[9px] text-[13px] whitespace-nowrap ${t.active ? "bg-[#1e4fb8] shadow-[inset_1px_1px_2px_#12348a]" : "bg-[#3b80f2] shadow-[inset_0_1px_1px_#6ba4fa,inset_-1px_-1px_1px_#2a5fc8]"}`}
          >
            <Glyph name={t.icon} big />
            <span className="ml-[4px] flex gap-[6px]">
              {t.count && <span className="font-bold text-[#f9cf8a]">{t.count}</span>}
              <span>{t.text}</span>
            </span>
            {t.more && (
              <svg viewBox="0 0 10 5" className="mr-[4px] ml-auto h-[5px] w-[10px]"><path d="M0 0h10L5 5z" fill="#fff" /></svg>
            )}
          </button>
        ))}
      </div>
      <div className="flex w-[180px] shrink-0 items-center bg-gradient-to-b from-[#1aa0ee] via-[#129bec] to-[#0f7fd6] shadow-[inset_1px_1px_1px_#5fc4fb]">
        <button type="button" aria-label="Show hidden icons" className="-ml-[9px] flex h-[18px] w-[18px] shrink-0 items-center justify-center rounded-full border border-[#8cc4f8] bg-[#2b7fe8]">
          <svg viewBox="0 0 9 9" className="h-[9px] w-[9px]"><path d={chevrons.left} fill="none" stroke="#fff" strokeWidth="2" /></svg>
        </button>
        <span className="ml-px flex items-center gap-[2px]">
          <Glyph name="balloon" big />
          <Glyph name="speaker" big />
          <span className="flex h-5 w-5 items-center justify-center bg-[#0b2a88] text-[13px]">82°</span>
          <Glyph name="buddy" big />
        </span>
        <time className="ml-auto pr-[18px] text-[14px] whitespace-nowrap">6:31 PM</time>
      </div>
    </footer>
  );
}

export default function App() {
  return (
    <div className="flex min-h-screen flex-col bg-[#a3b5ea] font-['Liberation_Sans',Arial,sans-serif] text-black">
      <Defs />
      <div className="mt-[2px] mr-[4px] ml-[2px] flex flex-1 flex-col rounded-t-[7px] border-x-4 border-b-4 border-[#0831d9] bg-[#ece9d8]">
        <header className="-mx-[4px] flex h-9 shrink-0 items-center rounded-t-[7px] bg-gradient-to-b from-[#2b6cf0] via-[#0554e6] to-[#0461fb] pr-[4px] pl-[6px] shadow-[inset_0_1px_1px_#5b97fb]">
          <Glyph name="cad" big />
          <h1 className="ml-[4px] flex-1 pt-[6px] font-['Roboto','Open_Sans',sans-serif] text-[17px] font-bold whitespace-nowrap text-white [text-shadow:1px_1px_1px_#0a1f7a]">
            AutoCAD 2008 - UNREGISTERED VERSION - [C:\arturo\Projects\TARP\Restrictor_modeling\Manhole_v2000_work.dwg]
          </h1>
          <div className="flex gap-[2px] pt-[2px]">
            <TitleButton label="Minimize" d={<path d="M5 19h11" strokeWidth="4" />} />
            <TitleButton label="Maximize" d={<path d="M3 5.500h19M4 5v15.500h17V5" strokeWidth="2.500" />} />
            <TitleButton label="Close" red d={<path d="M5 5l15 15M20 5L5 20" strokeWidth="3.200" />} />
          </div>
        </header>

        <div className="flex h-[25px] shrink-0 items-start border-b border-white">
          <svg viewBox="0 0 20 22" className="mt-px ml-[5px] h-[22px] w-5" aria-hidden="true">
            <path d="M1 0h14l4 6v16H1z" fill="#24466e" />
            <path d="M11 0h4l4 6-3 3z" fill="#d2deea" />
            <path d="M0 12c5-5 10-3 13 0s5 5 7 5v5H0z" fill="#f4c923" />
            <path d="M3 4h8M6.500 0v8" stroke="#fff" strokeWidth="1.300" />
          </svg>
          <nav className="flex flex-1 gap-[17px] pt-[2px] pl-[7px] text-[13px] leading-[20px]">
            {menus.map((m) => (
              <button key={m} type="button">{m}</button>
            ))}
          </nav>
          <input aria-label="Help question" placeholder="Type a question for help" className="mt-[3px] h-[19px] w-[268px] border-t border-l border-[#7f9db9] bg-white pt-px pl-[3px] text-[13px] outline-none placeholder:text-[#9a9a9a]" />
          <div className="mt-[3px] flex h-[18px] w-[65px] items-center rounded-[4px] border border-[#aca899] bg-[#f4f2e8]">
            <button type="button" aria-label="Search" className="flex flex-1 items-center justify-center gap-[4px]">
              <svg viewBox="0 0 17 17" className="h-4 w-4" fill="none">{art.search}</svg>
              <svg viewBox="0 0 4 2" className="h-[2px] w-1"><path d="M0 0h4L2 2z" /></svg>
            </button>
            <button type="button" aria-label="Communication" className="flex h-4 w-[17px] items-center justify-center border-l border-[#aca899]">
              <svg viewBox="0 0 17 17" className="h-[14px] w-[14px]" fill="none">{art.dish}</svg>
            </button>
            <button type="button" aria-label="Favorites" className="flex h-4 w-[18px] items-center justify-center border-l border-[#aca899]">
              <svg viewBox="0 0 17 17" className="h-[14px] w-[14px]">{art.star}</svg>
            </button>
          </div>
          <div className="ml-[8px] flex gap-[3px] pt-px">
            {["M6 13h6", "M8 8V6h7v5h-3M6 9h7v5H6zM6 9.500h7M8 6.500h7", "M7 7l6 6M13 7l-6 6"].map((d) => (
              <button key={d} type="button" aria-label="Drawing window" className="h-[22px] w-5 border-r border-b border-[#d8d5c4] bg-[#f3f1e7]">
                <svg viewBox="0 0 20 20" className="h-full w-full"><path d={d} stroke="#5d5a50" strokeWidth={d.length < 20 ? 2 : 1} fill="none" /></svg>
              </button>
            ))}
          </div>
        </div>

        <div className="flex gap-[3px]">
          <Bar items="new open save | print preview publish web | cut copy paste brush block | undo v redo w | pan zoomRt zoomWin zoomPrev | props dc palette sheet markup calc | help" />
          <Bar items="orbit orbit2 walk" />
        </div>
        <div className="flex gap-[3px]">
          <Bar items="poly box wedge cone sphere cyl torus pyramid helix plane | extrude pressPull sweep revolve loft | union subtract intersect | move3 rot3 align3" />
          <Bar items="layers">
            <div className="mr-px flex h-[22px] w-[299px] items-center border border-[#7f9db9] bg-white pr-px pl-[2px]">
              <Glyph name="bulb" />
              <Glyph name="sun" />
              <Glyph name="vpSun" />
              <Glyph name="lock" />
              <span className="h-[11px] w-[11px] shrink-0 border border-black" />
              <select aria-label="Layer" className="ml-[4px] flex-1 appearance-none font-['DejaVu_Sans',sans-serif] text-[12px] outline-none"><option>0</option></select>
              <ScrollButton dir="down" />
            </div>
            <Tool name="layerCur" />
            <Tool name="layerPrev" />
            <Tool name="layerState" />
          </Bar>
        </div>
        <div className="flex gap-[2px]">
          <Bar items="union subtract intersect | exFace mvFace offFace delFace rotFace taper copyFace colFace | copyEdge colEdge | imprint clean separate shell check" />
          <div role="toolbar" className="flex h-7 items-center border-t border-r border-b border-t-white border-r-[#aca899] border-b-[#aca899] pr-[3px]">
            <Grip />
            <Tool name="views" />
            <Sep />
            {["top", "bottom", "left", "right", "front", "back"].map((f) => (
              <button key={f} type="button" aria-label={f} className="flex h-[23px] w-[23px] items-center justify-center">
                <svg viewBox="0 0 17 17" className="h-[17px] w-[17px]">{viewBoxCube(f)}</svg>
              </button>
            ))}
            <Sep />
            {[0, 1, 2, 3].map((k) => (
              <button key={k} type="button" aria-label={`Isometric ${k + 1}`} className="flex h-[23px] w-[23px] items-center justify-center">
                <svg viewBox="0 0 17 17" className="h-[17px] w-[17px]">{isoView(k)}</svg>
              </button>
            ))}
            <Sep />
            <Tool name="camera" />
            <Sep />
            <Tool name="back" />
            <div className="ml-px flex h-[22px] w-[139px] items-center border border-[#c9c6b6]">
              <select aria-label="Named view" disabled className="flex-1 appearance-none" />
              <ScrollButton dir="down" off />
            </div>
          </div>
        </div>
        <div className="flex gap-[3px]">
          <Bar items="ucs | ucsWorld ucsPrev | ucsFace ucsObj ucsView | ucsOrg ucsZ ucs3 | ucsRx ucsRy ucsRz | ucsApply" />
          <Bar items="wire2d | wire3d hidden realistic conceptual | vsm" />
        </div>

        <main className="flex flex-1 border-t border-[#aca899]">
          <div className="flex w-[53px] shrink-0 gap-[2px]">
            <SideBar items="erase copyObj mirror offset array move rotate scale stretch trim extend breakPt brk join chamfer fillet explode" />
            <SideBar items="line xline pline polygon rect arc circle cloud spline ellipse elArc insert mkBlock point hatch gradient region table mtext" />
          </div>
          <div className="mr-px flex min-w-0 flex-1 flex-col">
            <div className="flex-1 border border-t-[#716f64] border-r-black border-b-black border-l-[#716f64] bg-[#c0c0c0]">
              <Model />
            </div>
            <LayoutTabs />
          </div>
        </main>
        <div className="h-[6px] shrink-0 border-t-2 border-white" />
        <CommandArea />
        <StatusBar />
      </div>
      <Taskbar />
    </div>
  );
}
